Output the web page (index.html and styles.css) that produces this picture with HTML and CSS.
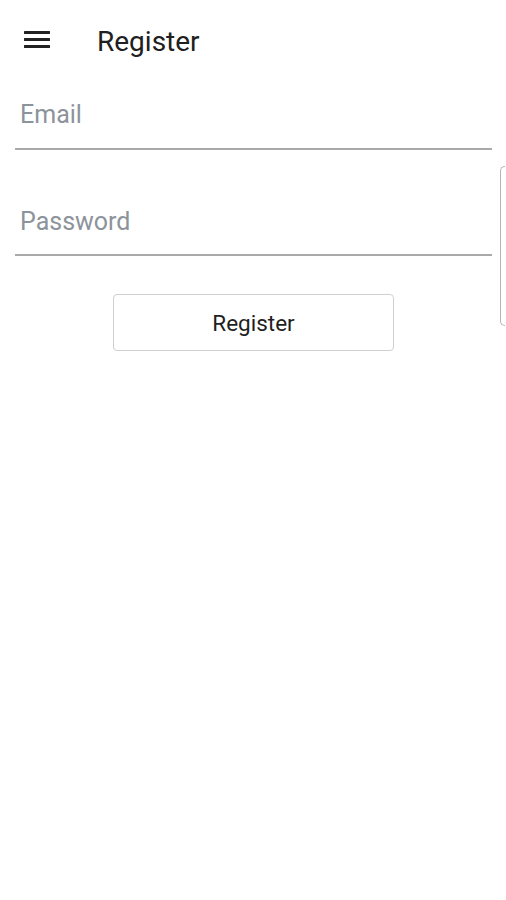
FILE: index.html
```html
<!DOCTYPE html>
<html lang="en">
<head>
<meta charset="utf-8">
<title>Register</title>
<link rel="stylesheet" href="styles.css">
</head>
<body>
<header class="appbar">
  <svg class="menu" width="26" height="17" viewBox="0 0 26 17" aria-hidden="true">
    <rect x="0" y="0" width="26" height="3" rx="0.5" fill="#222"/>
    <rect x="0" y="7" width="26" height="3" rx="0.5" fill="#222"/>
    <rect x="0" y="14" width="26" height="3" rx="0.5" fill="#222"/>
  </svg>
  <h1 class="title">Register</h1>
</header>
<main class="form">
  <input class="field field-email" type="email" placeholder="Email">
  <input class="field field-password" type="password" placeholder="Password">
  <button class="btn" type="button">Register</button>
</main>
<div class="side-panel"></div>
</body>
</html>
```
FILE: styles.css
```css
html, body {
  margin: 0;
  padding: 0;
  background: #ffffff;
}
body {
  width: 506px;
  height: 900px;
  overflow: hidden;
  font-family: Roboto, "Liberation Sans", sans-serif;
  color: #212121;
}
.appbar {
  display: flex;
  align-items: flex-start;
  height: 80px;
  padding: 26px 0 0 24px;
  box-sizing: border-box;
  gap: 47px;
}
.menu {
  display: block;
  margin-top: 5px;
  flex: none;
}
.title {
  margin: 0;
  font-size: 28px;
  line-height: 32px;
  font-weight: 400;
  color: #202020;
}
.form {
  display: flex;
  flex-direction: column;
  padding: 0 14px 0 15px;
}
.field {
  display: block;
  box-sizing: content-box;
  width: calc(100% - 5px);
  height: 28px;
  line-height: 28px;
  padding: 0 0 18px 5px;
  margin: 0;
  border: 0;
  border-bottom: 2px solid #a9a9a9;
  outline: none;
  background: transparent;
  font-family: Roboto, "Liberation Sans", sans-serif;
  font-size: 25px;
  color: #202020;
}
.field::placeholder {
  color: #8c939b;
  opacity: 1;
}
.field-email {
  margin-top: 21px;
  padding-bottom: 19px;
}
.field-password {
  margin-top: 58px;
}
.btn {
  align-self: center;
  margin-top: 38px;
  width: 281px;
  height: 57px;
  border: 1px solid #cfcfcf;
  border-radius: 4px;
  background: #ffffff;
  font-family: Roboto, "Liberation Sans", sans-serif;
  font-size: 22.5px;
  color: #1f1f1f;
  padding: 0;
}
.side-panel {
  position: absolute;
  left: 500px;
  top: 166px;
  width: 4px;
  height: 158px;
  border: 1.5px solid #b5b5b5;
  border-right: 0;
  border-radius: 6px 0 0 6px;
}
```
